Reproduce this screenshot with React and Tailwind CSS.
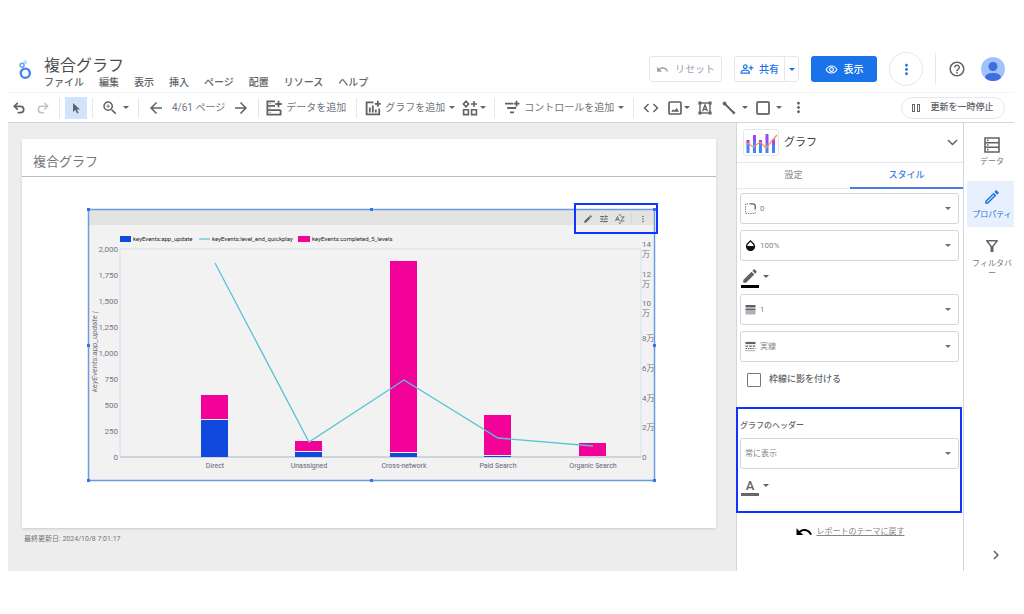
import React, { useState } from 'react'
import { Undo2, Redo2 } from 'lucide-react'
import {
  MdArrowBack,
  MdArrowForward,
  MdChevronRight,
  MdCode,
  MdEdit,
  MdHelpOutline,
  MdMoreVert,
  MdOutlineEdit,
  MdOutlineFilterAlt,
  MdOutlinePersonAddAlt,
  MdOutlineRemoveRedEye,
  MdTune,
  MdUndo,
  MdZoomIn,
} from 'react-icons/md'

const menus = ['ファイル', '編集', '表示', '挿入', 'ページ', '配置', 'リソース', 'ヘルプ']

const categories = [
  { name: 'Direct', x: 127, lower: 37, upper: 24, line: 54 },
  { name: 'Unassigned', x: 221, lower: 5, upper: 10, line: 233 },
  { name: 'Cross-network', x: 316, lower: 4, upper: 191, line: 171 },
  { name: 'Paid Search', x: 410, lower: 1, upper: 40, line: 229 },
  { name: 'Organic Search', x: 505, lower: 0, upper: 13, line: 237 },
]

const leftTicks = ['2,000', '1,750', '1,500', '1,250', '1,000', '750', '500', '250', '0']
const rightTicks = ['14', '12', '10', '8万', '6万', '4万', '2万', '0']

function Caret({ className = 'text-[#5f6368]' }) {
  return (
    <svg viewBox="0 0 6 3" className={`h-[3px] w-[6px] shrink-0 ${className}`} aria-hidden="true">
      <path d="M0 0h6L3 3z" fill="currentColor" />
    </svg>
  )
}

function Logo() {
  return (
    <svg viewBox="0 0 14 20" className="h-5 w-[14px]" fill="none" aria-hidden="true">
      <circle cx="7.3" cy="13.2" r="4.6" stroke="#4285f4" strokeWidth="2.4" />
      <circle cx="4.1" cy="5.2" r="2" stroke="#669df6" strokeWidth="1.5" />
      <circle cx="7.3" cy="2" r="1.3" stroke="#aecbfa" strokeWidth="1.1" />
    </svg>
  )
}

function AddDataIcon() {
  return (
    <svg viewBox="0 0 16 16" className="size-4" fill="none" stroke="#5f6368" strokeWidth="1.8" aria-hidden="true">
      <path d="M9 1.4H1.4v13.2h13.2V10M1.4 5.8H9M1.4 10.2h13.2M12.5 .8v6.4M9.3 4h6.4" />
      <path d="M3.6 3.6h1M3.6 8h1M3.6 12.4h1" strokeWidth="1" />
    </svg>
  )
}

function AddChartIcon() {
  return (
    <svg viewBox="0 0 16 16" className="size-4" fill="none" stroke="#5f6368" strokeWidth="1.8" aria-hidden="true">
      <path d="M8.5 2.3H1.6v12h12.6V8.5M12.8 .8v6M9.8 3.8h6M4.8 12.5v-5M7.8 12.5v-7M10.8 12.5v-3" />
    </svg>
  )
}

function CommunityIcon() {
  return (
    <svg viewBox="0 0 16 16" className="size-4" fill="none" stroke="#5f6368" strokeWidth="1.6" aria-hidden="true">
      <path d="M4 1.2 6.6 4 4 6.8 1.4 4zM12 1v6M9 4h6M1.6 9.8h4.8v4.8H1.6zM9.6 9.8h4.8v4.8H9.6z" />
    </svg>
  )
}

function AddControlIcon() {
  return (
    <svg viewBox="0 0 16 16" className="size-4" fill="none" stroke="#5f6368" strokeWidth="1.8" aria-hidden="true">
      <path d="M1 3.6h8M3.2 8h9M6 12.4h4M12.5 .8v5.6M9.7 3.6h5.8" />
    </svg>
  )
}

function ImageIcon() {
  return (
    <svg viewBox="0 0 14 14" className="size-[14px]" fill="none" stroke="#5f6368" strokeWidth="1.7" aria-hidden="true">
      <rect x="1" y="1" width="12" height="12" rx="1" />
      <path d="M3.2 10.8 5 8.2l1.4 1.4L8.8 7l2.2 3.8z" fill="#5f6368" stroke="none" />
    </svg>
  )
}

function TextBoxIcon() {
  return (
    <svg viewBox="0 0 14 14" className="size-[14px]" fill="none" stroke="#5f6368" aria-hidden="true">
      <rect x="2" y="2" width="10" height="10" strokeWidth="1.4" />
      <path d="M.4.4h3v3h-3zM10.6.4h3v3h-3zM.4 10.6h3v3h-3zM10.6 10.6h3v3h-3z" fill="#5f6368" stroke="none" />
      <path d="M4.6 10.3 7 3.9l2.4 6.4M5.4 8.4h3.2" strokeWidth="1.3" />
    </svg>
  )
}

function LineIcon() {
  return (
    <svg viewBox="0 0 14 14" className="size-[14px]" stroke="#5f6368" fill="#5f6368" aria-hidden="true">
      <path d="M2.5 2.5l9 9" strokeWidth="2" />
      <circle cx="2.5" cy="2.5" r="1.5" />
      <circle cx="11.8" cy="11.8" r="1" />
    </svg>
  )
}

function DataIcon() {
  return (
    <svg viewBox="0 0 16 16" className="size-4" fill="none" stroke="#5f6368" strokeWidth="1.6" aria-hidden="true">
      <path d="M1 1h14v14H1zM1 5.7h14M1 10.3h14" />
      <path d="M3 3.4h1.5M3 8h1.5M3 12.6h1.5" />
    </svg>
  )
}

function ComboChartIcon() {
  return (
    <svg viewBox="0 0 34 26" className="h-[26px] w-[34px]" aria-hidden="true">
      <path d="M2.5 14h3v9h-3zM9 11h3v12H9zM15 14h3v9h-3zM21.5 13h3v10h-3zM28 15h3v8h-3z" fill="#4285f4" />
      <path d="M2.5 10h3v4h-3zM9 5h3v6H9zM15 10h3v4h-3zM21.5 4h3v9h-3zM28 9h3v6h-3z" fill="#a142f4" />
      <path d="M1.5 12l8 5 6.5-5 6 6L33 5" fill="none" stroke="#ff8a65" strokeWidth="1.3" />
    </svg>
  )
}

function CornerIcon() {
  return (
    <svg viewBox="0 0 11 11" className="size-[11px]" fill="none" stroke="#5f6368" aria-hidden="true">
      <path d="M4.5.8H8q2.2 0 2.2 2.2v3.5" strokeWidth="1.3" />
      <path d="M3 .8H.6v9.6h9.6V7.5" strokeDasharray="1.2 1.2" />
    </svg>
  )
}

function OpacityIcon() {
  return (
    <svg viewBox="0 0 11 11" className="size-[11px]" aria-hidden="true">
      <path d="M5.5 0l3.3 3.3a4.6 4.6 0 1 1-6.6 0z" fill="#111" />
      <path d="M5.5 1.8L7.7 4q.9 1 1 2H2.3q.1-1 1-2z" fill="#fff" />
    </svg>
  )
}

function WeightIcon() {
  return (
    <svg viewBox="0 0 11 11" className="size-[11px]" fill="#5f6368" aria-hidden="true">
      <path d="M.5 1h10v2.6H.5zM.5 4.5h10v2H.5zM.5 7.4h10v1.2H.5zM.5 9.5h10v.7H.5z" />
    </svg>
  )
}

function DashIcon() {
  return (
    <svg viewBox="0 0 11 11" className="size-[11px]" fill="none" stroke="#5f6368" aria-hidden="true">
      <path d="M.5 2h10" strokeWidth="2.2" />
      <path d="M.5 5.2h10" strokeWidth="1.3" strokeDasharray="2.6 1" />
      <path d="M.5 7.5h10" strokeDasharray="1.5 .8" />
      <path d="M.5 9.7h10" strokeDasharray="1 1" />
    </svg>
  )
}

function SortIcon() {
  return (
    <svg viewBox="0 0 12 12" className="size-[10px]" fill="none" stroke="#5f6368" strokeWidth="1.1" aria-hidden="true">
      <path d="M.6 8.5L3 3l2.4 5.500M1.4 6.8h3.200M7 3.5h4l-4 5h4.200M4.5 1.800L6 .6l1.500 1.200M4.5 10.200L6 11.400l1.500-1.200" />
    </svg>
  )
}

function Header() {
  return (
    <header className="flex h-[45px] items-center border-b border-gray-100">
      <div className="ml-[10px]">
        <Logo />
      </div>
      <div className="ml-3 pt-[6px]">
        <h1 className="text-[16px] leading-[20px] text-[#4a4d51]">複合グラフ</h1>
        <nav className="flex gap-[15px] text-[10px] leading-[14px] font-medium text-[#5f6368]">
          {menus.map((m) => (
            <button key={m}>{m}</button>
          ))}
        </nav>
      </div>

      <div className="ml-auto flex items-center gap-3 pb-[2px] text-[10px]">
        <button disabled className="flex h-[26px] w-[73px] items-center justify-center gap-[6px] rounded-[3px] border border-gray-200 text-gray-400">
          <MdUndo size={13} />
          リセット
        </button>
        <div className="flex h-[26px] w-[65px] rounded-[3px] border border-gray-200 font-medium text-[#1a73e8]">
          <button className="flex flex-1 items-center justify-center gap-[5px]">
            <MdOutlinePersonAddAlt size={14} />
            共有
          </button>
          <button className="flex w-[14px] items-center justify-center border-l border-gray-200" aria-label="共有オプション">
            <Caret className="text-[#1a73e8]" />
          </button>
        </div>
        <button className="flex h-[26px] w-[66px] items-center justify-center gap-[6px] rounded-[3px] bg-[#1a73e8] font-medium text-white">
          <MdOutlineRemoveRedEye size={13} />
          表示
        </button>
        <button className="flex size-[34px] items-center justify-center rounded-full border border-gray-200 text-[#1a73e8]" aria-label="その他">
          <MdMoreVert size={17} />
        </button>
        <div className="h-8 w-px bg-gray-200" />
        <button className="text-[#5f6368]" aria-label="ヘルプ">
          <MdHelpOutline size={18} />
        </button>
        <button className="mr-[9px] ml-[3px] size-6 overflow-hidden rounded-full bg-[#a0c3ff]" aria-label="アカウント">
          <svg viewBox="0 0 24 24" fill="#3c6ee0">
            <circle cx="12" cy="9.5" r="4.5" />
            <path d="M4 21q0-5 8-5t8 5v3H4z" />
          </svg>
        </button>
      </div>
    </header>
  )
}

function Toolbar() {
  return (
    <div className="flex h-[30px] items-center border-b border-gray-300 text-[10px] text-[#70757a]">
      <div className="flex h-5 items-center gap-[10px] border-r border-gray-200 pr-[9px] pl-1">
        <button aria-label="元に戻す">
          <Undo2 size={14} color="#5f6368" strokeWidth={3} />
        </button>
        <button aria-label="やり直す" disabled>
          <Redo2 size={14} color="#bdc1c6" strokeWidth={2.5} />
        </button>
      </div>
      <div className="flex h-5 items-center border-r border-gray-200 px-[5px]">
        <button className="flex size-[22px] items-center justify-center bg-[#d2e3fc]" aria-label="選択">
          <svg viewBox="0 0 10 12" className="h-3 w-[10px]" fill="#5f6368" aria-hidden="true">
            <path d="M2 1l7 6.5H5.9l1.7 3.2-1.5.7-1.600-3.300L2 10z" />
          </svg>
        </button>
      </div>
      <button className="flex h-5 items-center gap-1 border-r border-gray-200 pr-[9px] pl-2" aria-label="ズーム">
        <MdZoomIn size={18} color="#5f6368" />
        <Caret />
      </button>
      <div className="flex h-5 items-center gap-[7px] border-r border-gray-200 px-2">
        <button aria-label="前のページ">
          <MdArrowBack size={18} color="#5f6368" />
        </button>
        <span>4/61 ページ</span>
        <button aria-label="次のページ">
          <MdArrowForward size={18} color="#5f6368" />
        </button>
      </div>
      <button className="flex h-5 items-center gap-1 border-r border-gray-200 pr-[10px] pl-[7px]">
        <AddDataIcon />
        データを追加
      </button>
      <div className="flex h-5 items-center gap-[7px] border-r border-gray-200 px-2">
        <button className="flex items-center gap-1">
          <AddChartIcon />
          グラフを追加
          <Caret />
        </button>
        <button className="flex items-center gap-[2px]" aria-label="コミュニティ ビジュアリゼーション">
          <CommunityIcon />
          <Caret />
        </button>
      </div>
      <button className="flex h-5 items-center gap-1 border-r border-gray-200 px-[9px]">
        <AddControlIcon />
        コントロールを追加
        <Caret />
      </button>
      <div className="flex h-5 items-center gap-2 pl-2">
        <button aria-label="URL の埋め込み">
          <MdCode size={18} color="#5f6368" />
        </button>
        <button className="flex items-center gap-[2px]" aria-label="画像">
          <ImageIcon />
          <Caret />
        </button>
        <button aria-label="テキスト">
          <TextBoxIcon />
        </button>
        <button className="flex items-center gap-[6px] pl-[2px]" aria-label="線">
          <LineIcon />
          <Caret />
        </button>
        <button className="flex items-center gap-[6px]" aria-label="図形">
          <span className="size-[14px] rounded-[2px] border-2 border-[#70757a]" />
          <Caret />
        </button>
        <button aria-label="その他のツール">
          <MdMoreVert size={17} color="#5f6368" />
        </button>
      </div>
      <button className="mr-[9px] ml-auto flex h-[22px] w-[104px] items-center justify-center gap-[10px] rounded-full border border-gray-200 text-[9px] font-medium text-[#5f6368]">
        <span className="flex gap-[2px]">
          <span className="h-2 w-[3px] border border-[#5f6368]" />
          <span className="h-2 w-[3px] border border-[#5f6368]" />
        </span>
        更新を一時停止
      </button>
    </div>
  )
}

function ComboChart() {
  return (
    <svg viewBox="0 0 567 272" className="block w-full overflow-visible" role="img" aria-label="複合グラフ">
      <rect width="567" height="272" fill="#f2f2f2" />
      <rect width="567" height="16" fill="#e3e3e3" />
      <g fontSize="6" fill="#222">
        <rect x="32" y="27" width="11" height="6" fill="#1049de" />
        <text x="45" y="32">keyEvents:app_update</text>
        <path d="M111 30h11" stroke="#57c5d5" strokeWidth="1.2" />
        <text x="124" y="32">keyEvents:level_end_quickplay</text>
        <rect x="210" y="27" width="12" height="6" fill="#f20298" />
        <text x="224" y="32">keyEvents:completed_5_levels</text>
      </g>
      <path d="M32 248V40H553V248" fill="none" stroke="#d3dff2" />
      <path d="M32 248H553" stroke="#aab4c8" />
      <g fontSize="8" fill="#757582">
        {leftTicks.map((t, i) => (
          <text key={t} x="30" y={43 + i * 26} textAnchor="end">
            {t}
          </text>
        ))}
      </g>
      <g fontSize="8" fill="#757582">
        {rightTicks.map((t, i) => (
          <text key={t} x="554" y={(i < 3 ? 38 : 43) + Math.round(i * 29.7)}>
            {t}
            {i < 3 && (
              <tspan x="554" dy="10">
                万
              </tspan>
            )}
          </text>
        ))}
      </g>
      <text transform="translate(9 183) rotate(-90)" fontSize="8" fontStyle="italic" fill="#757582">
        keyEvents:app_update |
      </text>
      {categories.map((c) => (
        <g key={c.name}>
          <rect x={c.x - 14} y={248 - c.lower} width="27" height={c.lower} fill="#1049de" />
          <rect x={c.x - 14} y={247 - c.lower - c.upper} width="27" height={c.upper} fill="#f20298" />
          <text x={c.x} y="259" fontSize="7" textAnchor="middle" fill="#66666f">
            {c.name}
          </text>
        </g>
      ))}
      <polyline
        points={categories.map((c) => `${c.x},${c.line}`).join(' ')}
        fill="none"
        stroke="#57c5d5"
        strokeWidth="1.3"
      />
      {/* selection frame */}
      <rect x=".5" y=".5" width="566" height="271" fill="none" stroke="#6d9be0" strokeWidth="1.5" />
      <g fill="#2f76e8">
        {[0, 283, 566].map((x) =>
          [0, 136, 271].map((y) =>
            x === 283 && y === 136 ? null : <rect key={`${x}-${y}`} x={x - 1} y={y - 1} width="3" height="3" />
          )
        )}
      </g>
    </svg>
  )
}

function Canvas() {
  return (
    <main className="min-w-0 flex-1 bg-[#ededed] pt-4 pr-5 pb-[25px] pl-[14px]">
      <section className="bg-white pb-[47px] shadow">
        <h2 className="h-[38px] border-b border-[#bdbdbd] pt-[14px] pl-[11px] text-[13px] leading-[18px] text-[#757582]">
          複合グラフ
        </h2>
        <div className="relative mt-8 mr-[61px] ml-[66px]">
          <ComboChart />
          <div className="absolute -top-[6px] -right-[3px] flex h-[31px] w-[84px] items-center justify-end gap-[6px] border-2 border-[#1034ff] pr-2 text-[#5f6368]">
            <button aria-label="編集">
              <MdEdit size={10} />
            </button>
            <button aria-label="調整">
              <MdTune size={10} />
            </button>
            <button aria-label="並べ替え">
              <SortIcon />
            </button>
            <button className="border-l border-gray-300 pl-[6px]" aria-label="その他">
              <MdMoreVert size={10} />
            </button>
          </div>
        </div>
      </section>
      <p className="mt-1 ml-[2px] text-[7px] leading-[14px] text-[#70757a]">最終更新日: 2024/10/8 7:01:17</p>
    </main>
  )
}

function SelectField({ label, icon, value }) {
  return (
    <label className="flex h-[31px] items-center gap-1 rounded-[3px] border border-gray-300 pr-[7px] pl-1 text-[#80868b]">
      {icon}
      <select aria-label={label} className="min-w-0 flex-1 appearance-none bg-transparent text-[8px] outline-none">
        <option>{value}</option>
      </select>
      <Caret className="text-[#6b6f74]" />
    </label>
  )
}

function PropertyPanel() {
  const [shadow, setShadow] = useState(false)

  return (
    <aside className="w-[228px] shrink-0 border-x border-gray-300 bg-white">
      <div className="flex h-10 items-center border-b border-gray-200 pr-[5px] pl-[6px]">
        <span className="flex h-[27px] w-[36px] items-center justify-center rounded-[3px] border border-gray-200">
          <ComboChartIcon />
        </span>
        <span className="ml-[5px] pt-[2px] text-[11px] text-[#3c4043]">グラフ</span>
        <button className="ml-auto" aria-label="グラフの種類">
          <svg viewBox="0 0 11 7" className="h-[7px] w-[11px]" fill="none" stroke="#5f6368" strokeWidth="1.5" aria-hidden="true">
            <path d="M1 1l4.5 4.5L10 1" />
          </svg>
        </button>
      </div>
      <div className="flex h-[26px] border-b border-gray-200 text-[9px]">
        <button className="flex-1 text-[#80868b]">設定</button>
        <button className="-mb-px flex-1 border-b-2 border-[#4a7fe0] pt-[2px] font-medium text-[#4a7fe0]">スタイル</button>
      </div>

      <div className="flex flex-col gap-[6px] pt-1 pr-1 pl-[3px]">
        <SelectField label="枠線の半径" value="0" icon={<CornerIcon />} />
        <SelectField label="不透明度" value="100%" icon={<OpacityIcon />} />
        <button className="flex h-[21px] items-start pl-px" aria-label="枠線の色">
          <span className="flex w-[18px] flex-col items-center">
            <MdEdit size={18} color="#5f6368" />
            <span className="h-[3px] w-full bg-black" />
          </span>
          <span className="pt-2 pl-1">
            <Caret />
          </span>
        </button>
        <SelectField label="枠線の太さ" value="1" icon={<WeightIcon />} />
        <SelectField label="枠線のスタイル" value="実線" icon={<DashIcon />} />
        <label className="flex h-6 items-center gap-2 pl-[7px] text-[9px] font-medium text-[#5f6368]">
          <input
            type="checkbox"
            checked={shadow}
            onChange={(e) => setShadow(e.target.checked)}
            className="size-[14px] appearance-none rounded-[1px] border border-[#757575] checked:bg-[#1a73e8]"
          />
          枠線に影を付ける
        </label>
      </div>

      <section className="mt-[15px] mr-px -ml-px h-[106px] border-2 border-[#1034ff] pr-px pl-[2px]">
        <h3 className="pt-[10px] pb-[5px] text-[8px] leading-[14px] font-medium text-[#5f6368]">グラフのヘッダー</h3>
        <SelectField label="グラフのヘッダー" value="常に表示" />
        <button className="mt-[9px] flex items-start pl-px" aria-label="フォントの色">
          <span className="flex w-[18px] flex-col items-center text-[13px] leading-[15px] font-medium text-[#5f6368]">
            A
            <span className="h-[3px] w-full bg-[#666]" />
          </span>
          <span className="pt-[6px] pl-1">
            <Caret />
          </span>
        </button>
      </section>

      <div className="mt-[10px] flex items-center justify-center gap-1 pr-[1px]">
        <MdUndo size={18} />
        <a href="#theme" className="text-[8px] text-[#80868b] underline">
          レポートのテーマに戻す
        </a>
      </div>
    </aside>
  )
}

function SideRail() {
  return (
    <nav className="flex w-[50px] shrink-0 flex-col overflow-hidden pl-[3px] text-[8px] leading-[10px] text-[#757a80]">
      <button className="flex flex-col items-center gap-1 pt-[14px] pl-[3px]">
        <DataIcon />
        データ
      </button>
      <button className="mt-[14px] flex h-[46px] flex-col items-center justify-center gap-1 rounded-l-[2px] bg-[#e8f0fe] pl-[3px] text-[#1a73e8]">
        <MdOutlineEdit size={18} />
        <span className="whitespace-nowrap">プロパティ</span>
      </button>
      <button className="mt-[10px] flex flex-col items-center gap-1 pl-[3px]">
        <MdOutlineFilterAlt size={18} color="#5f6368" />
        <span className="w-[42px] break-all">フィルタバー</span>
      </button>
      <button className="mt-auto mb-[7px] ml-[20px] self-start" aria-label="パネルを閉じる">
        <MdChevronRight size={18} color="#5f6368" />
      </button>
    </nav>
  )
}

export default function App() {
  return (
    <div className="min-h-screen bg-white pt-12 pr-[10px] pb-10 pl-2 font-['Roboto','Noto_Sans_CJK_JP',sans-serif]">
      <Header />
      <Toolbar />
      <div className="flex">
        <Canvas />
        <PropertyPanel />
        <SideRail />
      </div>
    </div>
  )
}
